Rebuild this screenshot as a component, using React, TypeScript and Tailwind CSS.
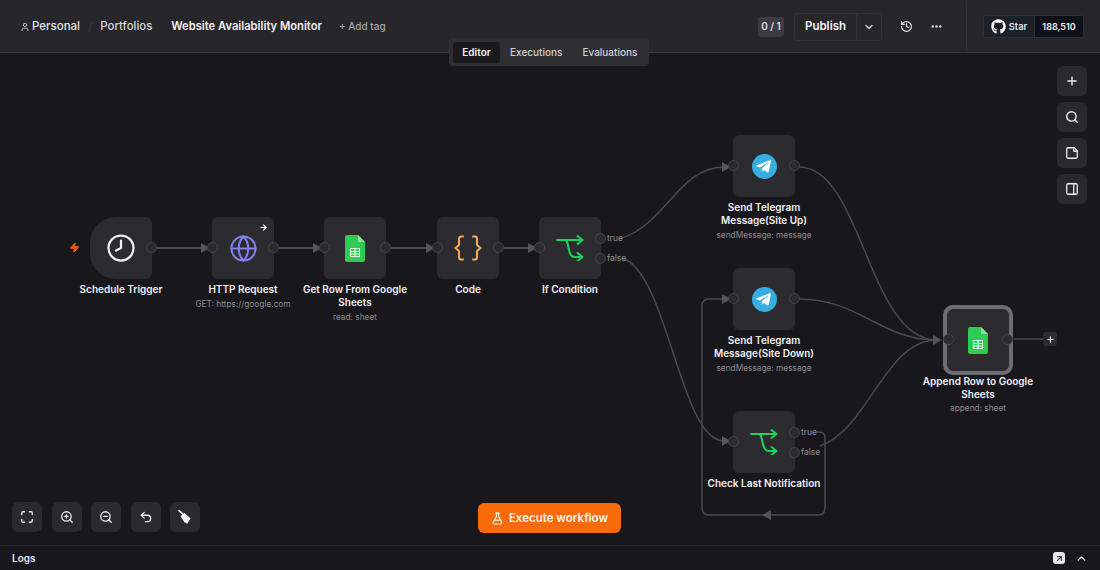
import React from "react";
import { Clock, Globe, Plus, Search, StickyNote, PanelRight, Maximize, ZoomIn, ZoomOut, Undo2, FlaskConical, History, Ellipsis, ChevronDown, ChevronUp, User, Zap, ArrowRight } from "lucide-react";
import { FaGithub, FaTelegramPlane } from "react-icons/fa";

const Sheets = ({ s = 27 }: { s?: number }) => (
  <svg width={s * 0.74} height={s} viewBox="0 0 20 27">
    <path d="M2 0h11l7 7v18a2 2 0 0 1-2 2H2a2 2 0 0 1-2-2V2a2 2 0 0 1 2-2z" fill="#2ecc52" />
    <path d="M13 0l7 7h-7z" fill="#8fe0a4" />
    <path d="M5 13h10v9H5z M6 14v2h3.4v-2z M10.6 14v2H14v-2z M6 17v1.5h3.4V17z M10.6 17v1.5H14V17z M6 19.5V21h3.4v-1.5z M10.6 19.5V21H14v-1.5z" fill="#e9f9ee" fillRule="evenodd" />
  </svg>
);

const IfIcon = () => (
  <svg width="28" height="26" viewBox="0 0 28 26" fill="none" stroke="#1fd15a" strokeWidth="2" strokeLinecap="round" strokeLinejoin="round">
    <path d="M1 5h25.5M21.5 1l5 4-5 4" />
    <path d="M9 5c2 0 2.500 3 3.500 8 1 6 2.500 9 6 9h8M21.500 18l5 4-5 4" />
  </svg>
);

const BracesIcon = () => (
  <svg width="28" height="26" viewBox="0 0 28 26" fill="none" stroke="#f3ac58" strokeWidth="2" strokeLinecap="round" strokeLinejoin="round">
    <path d="M9 1.500H7a2 2 0 0 0-2 2V10l-3.500 3L5 16v6.500a2 2 0 0 0 2 2h2" />
    <path d="M19 1.500h2a2 2 0 0 1 2 2V10l3.500 3L23 16v6.500a2 2 0 0 1-2 2h-2" />
  </svg>
);

const Broom = () => (
  <svg width="16" height="16" viewBox="0 0 16 16" fill="#f4f3f6">
    <path d="M1 1.800L2.200 0.800L6.600 4.600L5.400 6z" />
    <path d="M5 5.800L7.400 4L13.600 9.500L10 15L8.500 13.500L8 14L3.500 7.500z" />
  </svg>
);

const Tg = () => (
  <div className="w-[25px] h-[25px] rounded-full bg-[#37aee2] flex items-center justify-center text-white">
    <FaTelegramPlane size={17} className="-ml-[2px]" />
  </div>
);

type NodeProps = {
  x: number; y: number; title: string[]; sub?: string; icon: React.ReactNode;
  outs?: string[]; trigger?: boolean; extra?: React.ReactNode;
};

const Handle = ({ cls }: { cls: string }) => (
  <span className={`absolute w-[11px] h-[11px] rounded-full bg-[#2b2a2e] border border-[#464549] ${cls}`} />
);

const WNode = ({ x, y, title, sub, icon, outs, trigger, extra }: NodeProps) => (
  <div className="absolute w-[62px] h-[62px]" style={{ left: x, top: y }}>
    <div className={`w-full h-full bg-[#2c2b2f] flex items-center justify-center ${trigger ? "rounded-l-[26px] rounded-r-[6px]" : "rounded-[6px]"}`}>{icon}</div>
    {extra}
    {!trigger && <Handle cls="-left-[5px] top-[25px]" />}
    {outs ? (
      <>
        <Handle cls="-right-[5px] top-[16px]" />
        <Handle cls="-right-[5px] top-[36px]" />
        <span className="absolute left-[68px] top-[16px] text-[8.5px] leading-[11px] text-[#8c8b8f]">{outs[0]}</span>
        <span className="absolute left-[68px] top-[36px] text-[8.5px] leading-[11px] text-[#8c8b8f]">{outs[1]}</span>
      </>
    ) : (
      <Handle cls="-right-[5px] top-[25px]" />
    )}
    <div className="absolute top-[66px] left-1/2 -translate-x-1/2 w-[140px] text-center">
      {title.map((t) => (
        <div key={t} className="text-[10px] leading-[13px] font-semibold text-[#f1f0f3]">{t}</div>
      ))}
      {sub && <div className="mt-[2px] text-[8.3px] leading-[12px] text-[#8c8b8f]">{sub}</div>}
    </div>
  </div>
);

const Ctl = ({ children }: { children: React.ReactNode }) => (
  <div className="w-[30px] h-[30px] rounded-[6px] bg-[#2a292d] flex items-center justify-center text-[#eeedf0]">{children}</div>
);

const Arrow = ({ x, y }: { x: number; y: number }) => (
  <path d={`M${x - 9} ${y - 5}L${x} ${y}L${x - 9} ${y + 5}z`} fill="#55545a" />
);

export default function App() {
  return (
    <div className="w-[1100px] h-[570px] flex flex-col overflow-hidden bg-[#18171b] text-white" style={{ fontFamily: "Inter, 'Liberation Sans', sans-serif" }}>
      <header className="h-[53px] shrink-0 bg-[#27262a] border-b border-[#37363a] flex items-center pl-[20px] pt-[1px]">
        <User size={10} className="text-[#d6d5d9]" />
        <span className="ml-[2px] text-[11.500px] font-medium text-[#e4e3e7]">Personal</span>
        <span className="ml-[8px] text-[12px] text-[#3b3a3e]">/</span>
        <span className="ml-[8px] text-[11.400px] font-medium text-[#d9d8dc]">Portfolios</span>
        <span className="ml-[19px] text-[11.200px] font-semibold text-[#f2f1f4]">Website Availability Monitor</span>
        <span className="ml-[17px] text-[10px] font-medium text-[#a5a4a8]">+ Add tag</span>
        <div className="ml-auto flex items-center h-full">
          <span className="w-[26px] h-[20px] rounded-[3px] bg-[#3c3b3f] flex items-center justify-center text-[10px] font-semibold text-[#dcdbde]">0 / 1</span>
          <div className="ml-[10px] w-[88px] h-[28px] rounded-[4px] border border-[#323135] flex items-center">
            <span className="w-[61px] text-center text-[11.500px] font-semibold text-[#f4f3f6]">Publish</span>
            <span className="w-px h-full bg-[#323135]" />
            <span className="flex-1 flex justify-center"><ChevronDown size={12} strokeWidth={2.5} className="text-[#dcdbde]" /></span>
          </div>
          <History size={13} strokeWidth={2.2} className="ml-[18px] text-[#e4e3e7]" />
          <Ellipsis size={13} strokeWidth={2.5} className="ml-[17px] text-[#e4e3e7]" />
          <span className="ml-[23px] w-px h-full bg-[#323135]" />
          <div className="ml-[16px] mr-[16px] w-[101px] h-[23px] rounded-[3px] border border-[#2e2f35] flex items-center overflow-hidden">
            <div className="w-[50px] h-full bg-[#1c2129] flex items-center justify-center gap-[3px]">
              <FaGithub size={15} className="text-white" />
              <span className="text-[9.300px] font-semibold text-[#dfe3e8]">Star</span>
            </div>
            <div className="flex-1 h-full bg-[#0e1117] border-l border-[#2e2f35] flex items-center justify-center text-[9px] font-semibold text-[#eef0f3]">188,510</div>
          </div>
        </div>
      </header>

      <main className="relative flex-1">
        <div className="absolute left-[449px] -top-[15px] z-10 w-[200px] h-[28px] rounded-[4px] bg-[#2f2e32] flex items-center pl-[4px]">
          <span className="w-[47px] h-[21px] rounded-[3px] bg-[#1a191d] flex items-center justify-center text-[10px] font-semibold text-[#f2f1f4]">Editor</span>
          <span className="ml-[10px] text-[10px] font-medium text-[#d0cfd3]">Executions</span>
          <span className="ml-[20px] text-[10px] font-medium text-[#d0cfd3]">Evaluations</span>
        </div>

        <svg className="absolute left-0 -top-[53px]" width="1100" height="570" fill="none" stroke="#4a494e" strokeWidth="1.5">
          <path d="M157 248H203M279 248H315M391 248H428M503 248H530" strokeWidth="2" />
          <path d="M622 238C665 224 680 167 724 167" />
          <path d="M622 258C668 272 680 441 724 441" />
          <path d="M799 167C862 167 868 340 937 340" />
          <path d="M799 299C860 299 880 340 937 340" />
          <path d="M820 446C868 430 885 340 937 340" />
          <path d="M817 432H819Q825 432 825 438V508Q825 515 818 515H709Q702 515 702 508V306Q702 299 709 299H724" />
          <path d="M1014 339H1044" />
          <g stroke="none">
            <Arrow x={210} y={248} />
            <Arrow x={322} y={248} />
            <Arrow x={435} y={248} />
            <Arrow x={537} y={248} />
            <Arrow x={731} y={167} />
            <Arrow x={731} y={299} />
            <Arrow x={731} y={441} />
            <Arrow x={942} y={340} />
            <path d="M762 515L771 510V520z" fill="#55545a" />
          </g>
        </svg>

        <div className="absolute -top-[53px] left-0 w-[1100px] h-[570px]">
          <Zap size={11} className="absolute left-[69px] top-[242px] text-[#e8590c] fill-[#e8590c]" />
          <WNode x={90} y={217} trigger title={["Schedule Trigger"]} icon={<Clock size={30} strokeWidth={1.8} className="text-[#f0eff2] -scale-x-100" />} />
          <WNode x={212} y={217} title={["HTTP Request"]} sub="GET: https://google.com" icon={<Globe size={29} strokeWidth={1.7} className="text-[#7f80ee]" />} extra={<ArrowRight size={9} strokeWidth={3} className="absolute right-[6px] top-[6px] text-white" />} />
          <WNode x={324} y={217} title={["Get Row From Google", "Sheets"]} sub="read: sheet" icon={<Sheets />} />
          <WNode x={437} y={217} title={["Code"]} icon={<BracesIcon />} />
          <WNode x={539} y={217} title={["If Condition"]} outs={["true", "false"]} icon={<IfIcon />} />
          <WNode x={733} y={135} title={["Send Telegram", "Message(Site Up)"]} sub="sendMessage: message" icon={<Tg />} />
          <WNode x={733} y={268} title={["Send Telegram", "Message(Site Down)"]} sub="sendMessage: message" icon={<Tg />} />
          <WNode x={733} y={411} title={["Check Last Notification"]} outs={["true", "false"]} icon={<IfIcon />} />

          <div className="absolute left-[943px] top-[305px] w-[70px] h-[70px] rounded-[10px] border-[4px] border-[#6e6d71] bg-[#2c2b2f] flex items-center justify-center">
            <Sheets />
            <Handle cls="-left-[4px] top-[25px]" />
            <Handle cls="-right-[4px] top-[25px]" />
          </div>
          <div className="absolute left-[908px] top-[375px] w-[140px] text-center">
            <div className="text-[10px] leading-[13px] font-semibold text-[#f1f0f3]">Append Row to Google</div>
            <div className="text-[10px] leading-[13px] font-semibold text-[#f1f0f3]">Sheets</div>
            <div className="mt-[1px] text-[8.300px] leading-[12px] text-[#8c8b8f]">append: sheet</div>
          </div>
          <div className="absolute left-[1043px] top-[332px] w-[14px] h-[14px] rounded-[3px] bg-[#2c2b2f] flex items-center justify-center">
            <Plus size={9} strokeWidth={3} className="text-[#e8e7ea]" />
          </div>
        </div>

        <div className="absolute right-[13px] top-[13px] flex flex-col gap-[6px]">
          <Ctl><Plus size={14} strokeWidth={2.4} /></Ctl>
          <Ctl><Search size={14} strokeWidth={2.4} /></Ctl>
          <Ctl><StickyNote size={14} strokeWidth={2.2} /></Ctl>
          <Ctl><PanelRight size={14} strokeWidth={2.2} /></Ctl>
        </div>

        <div className="absolute left-[12px] top-[449px] flex gap-[9.500px]">
          <Ctl><Maximize size={14} strokeWidth={2.2} /></Ctl>
          <Ctl><ZoomIn size={14} strokeWidth={2.2} /></Ctl>
          <Ctl><ZoomOut size={14} strokeWidth={2.2} /></Ctl>
          <Ctl><Undo2 size={14} strokeWidth={2.2} /></Ctl>
          <Ctl><Broom /></Ctl>
        </div>

        <button className="absolute left-[478px] top-[450px] w-[143px] h-[30px] pt-[1px] rounded-[6px] bg-[#f96a0a] flex items-center justify-center gap-[5px] text-[11.500px] font-semibold text-[#fdf3ea]">
          <FlaskConical size={13} strokeWidth={2} />
          Execute workflow
        </button>
      </main>

      <footer className="h-[25px] shrink-0 border-t border-[#28272b] flex items-center pl-[12px] pr-[12px]">
        <span className="text-[10px] font-semibold text-[#e8e7ea]">Logs</span>
        <div className="ml-auto w-[12px] h-[12px] rounded-[3px] bg-[#e8e7ea] flex items-center justify-center">
          <ArrowRight size={9} strokeWidth={3} className="-rotate-45 text-[#3b3a3e]" />
        </div>
        <ChevronUp size={13} strokeWidth={2.5} className="ml-[10px] text-[#e8e7ea]" />
      </footer>
    </div>
  );
}
